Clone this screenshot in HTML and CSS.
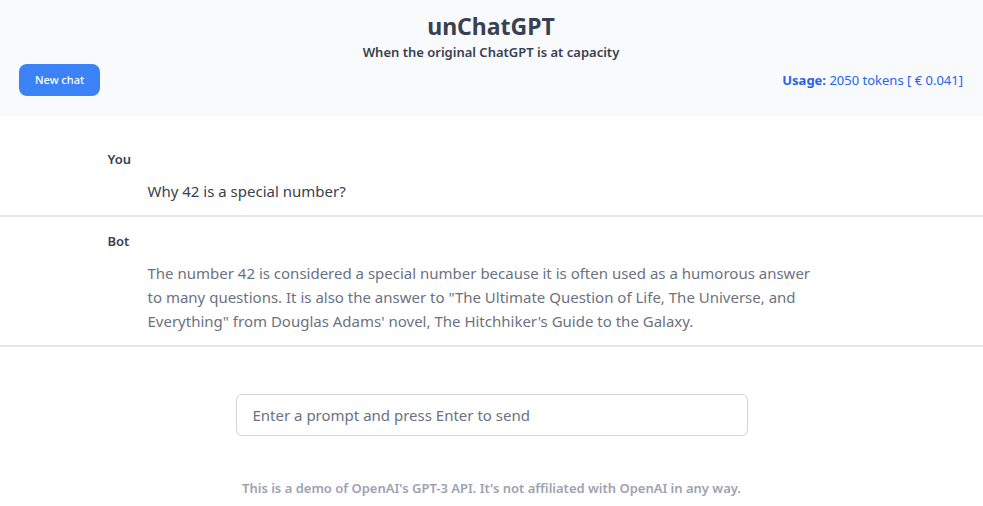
FILE: index.html
```html
<!DOCTYPE html>
<html lang="en">
<head>
<meta charset="utf-8">
<title>unChatGPT</title>
<link rel="stylesheet" href="styles.css">
</head>
<body>
<header class="header">
  <h1 class="title">unChatGPT</h1>
  <p class="tagline">When the original ChatGPT is at capacity</p>
  <div class="toolbar">
    <button class="new-chat" type="button">New chat</button>
    <p class="usage"><strong>Usage:</strong> 2050 tokens [ € 0.041]</p>
  </div>
</header>
<main>
  <article class="message">
    <div class="message-inner">
      <h2 class="author">You</h2>
      <p class="text text-user">Why 42 is a special number?</p>
    </div>
  </article>
  <article class="message">
    <div class="message-inner">
      <h2 class="author">Bot</h2>
      <p class="text">The number 42 is considered a special number because it is often used as a humorous answer to many questions. It is also the answer to "The Ultimate Question of Life, The Universe, and Everything" from Douglas Adams' novel, The Hitchhiker's Guide to the Galaxy.</p>
    </div>
  </article>
  <form class="prompt-form">
    <input class="prompt" type="text" aria-label="Prompt" placeholder="Enter a prompt and press Enter to send">
  </form>
</main>
<footer class="footer">This is a demo of OpenAI's GPT-3 API. It's not affiliated with OpenAI in any way.</footer>
</body>
</html>
```

FILE: styles.css
```css
* {
  box-sizing: border-box;
}

body {
  margin: 0;
  background: #fff;
  color: #374151;
  font-family: "Segoe UI", "Noto Sans", sans-serif;
  font-size: 15px;
  line-height: 24px;
}

h1, h2, p {
  margin: 0;
}

.header {
  padding: 8px 20px 20px 19px;
  background: #f9fafb;
  text-align: center;
}

.title {
  font-size: 23px;
  font-weight: 700;
  line-height: 36px;
}

.tagline {
  font-size: 13px;
  font-weight: 600;
  line-height: 16px;
}

.toolbar {
  display: flex;
  align-items: center;
  justify-content: space-between;
  margin-top: 4px;
}

.new-chat {
  height: 32px;
  padding: 0 16px;
  border: 0;
  border-radius: 8px;
  background: #3b82f6;
  color: #fff;
  font: 500 11px/16px "Segoe UI", "Noto Sans", sans-serif;
}

.usage {
  color: #2563eb;
  font-size: 13px;
}

.usage strong {
  font-weight: 700;
}

main {
  padding-top: 19px;
}

.message {
  padding: 12px 16px;
  border-bottom: 2px solid #e5e7eb;
}

.message-inner {
  max-width: 768px;
  margin: 0 auto;
}

.author {
  margin-bottom: 8px;
  font-size: 13px;
  font-weight: 600;
}

.text {
  max-width: 672px;
  margin-left: 40px;
  color: #6b7280;
}

.text-user {
  color: #374151;
}

.prompt-form {
  display: flex;
  justify-content: center;
  padding: 47px 16px 40px;
}

.prompt {
  width: 100%;
  max-width: 512px;
  height: 42px;
  padding: 0 16px;
  border: 1px solid #d1d5db;
  border-radius: 6px;
  background: #fff;
  color: #1f2937;
  font: inherit;
}

.prompt::placeholder {
  color: #6b7280;
  opacity: 1;
}

.footer {
  color: #9ca3af;
  font-size: 13px;
  font-weight: 600;
  text-align: center;
}
```
